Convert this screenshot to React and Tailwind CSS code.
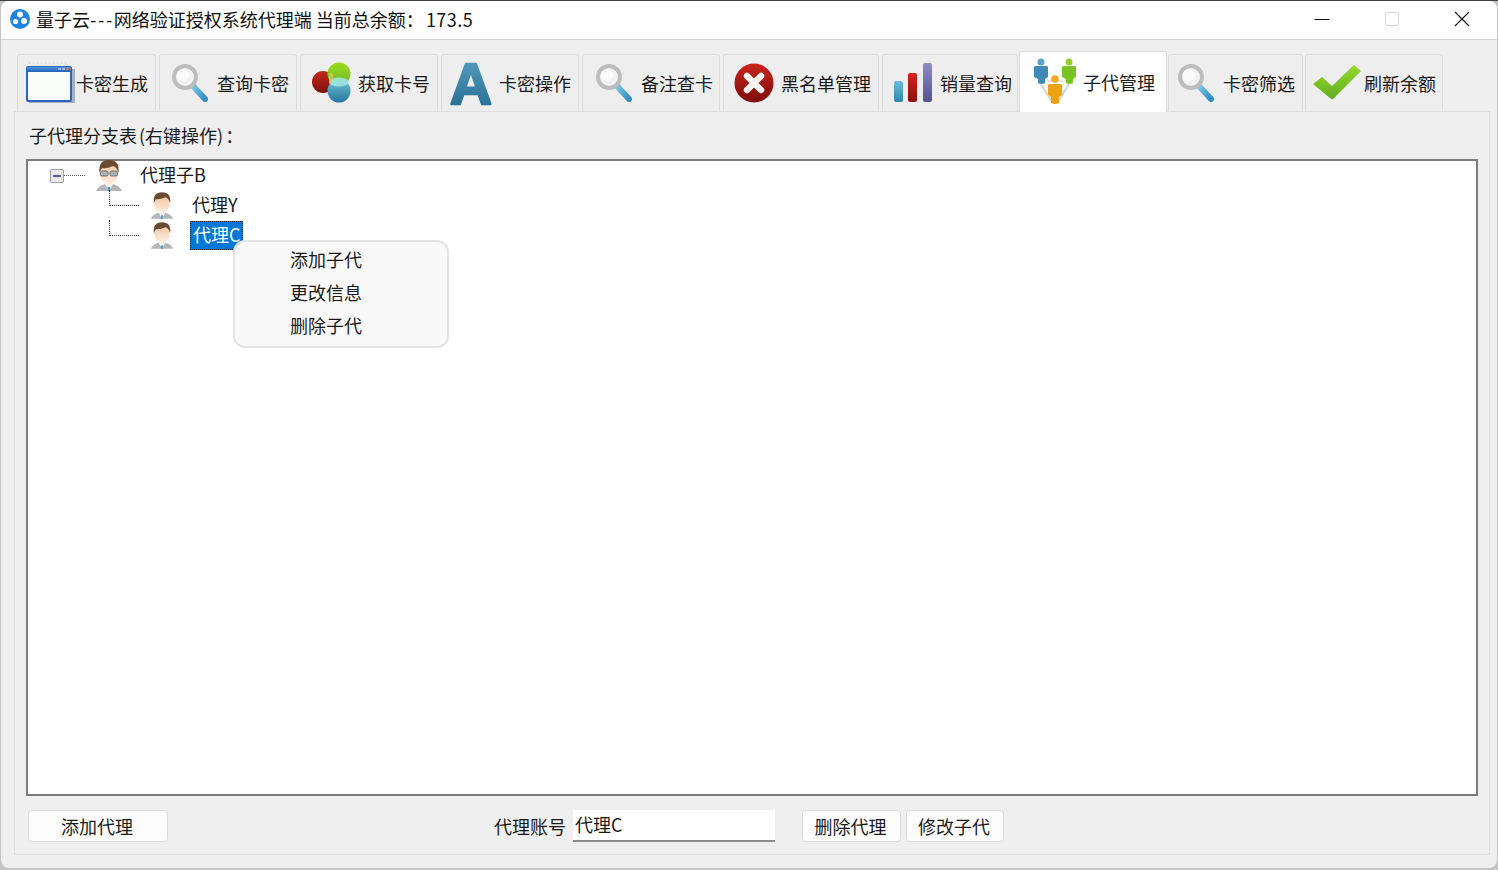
import React from "react";

const font = { fontFamily: '"Noto Sans CJK SC", "Liberation Sans", sans-serif' };

const WindowIcon = () => (
  <svg width="50" height="46" viewBox="0 0 50 46">
    <defs>
      <linearGradient id="winBar" x1="0" y1="0" x2="0" y2="1">
        <stop offset="0" stopColor="#4f9ae0" />
        <stop offset="1" stopColor="#1f5fb4" />
      </linearGradient>
    </defs>
    <g stroke="#bcd0d8" strokeWidth="1" strokeDasharray="1 3">
      <line x1="4" y1="3" x2="42" y2="3" />
    </g>
    <rect x="4" y="9" width="46" height="34" fill="#6b7f96" opacity="0.55" />
    <rect x="2" y="7" width="44" height="34" rx="1" fill="#fbfdfa" stroke="#2a66bd" strokeWidth="2" />
    <rect x="2" y="7" width="44" height="5" fill="url(#winBar)" />
    <rect x="33" y="8" width="3" height="2" fill="#8fb7e8" />
    <rect x="37" y="8" width="3" height="2" fill="#8fb7e8" />
    <rect x="41" y="8" width="3" height="2" fill="#e0764c" />
  </svg>
);

const SearchIcon = ({ id }) => (
  <svg width="38" height="40" viewBox="0 0 38 40">
    <defs>
      <linearGradient id={id} x1="0" y1="0" x2="1" y2="1">
        <stop offset="0" stopColor="#7cc6e6" />
        <stop offset="1" stopColor="#2f8fc0" />
      </linearGradient>
    </defs>
    <line x1="22" y1="23" x2="34" y2="36" stroke={`url(#${id})`} strokeWidth="6" strokeLinecap="round" />
    <circle cx="14" cy="14" r="11" fill="#f2f2f2" stroke="#bdbdbd" strokeWidth="4" />
    <circle cx="12" cy="12" r="6" fill="#fbfbfb" />
  </svg>
);

const BallsIcon = () => (
  <svg width="40" height="42" viewBox="0 0 40 42">
    <defs>
      <linearGradient id="ballRed" x1="0" y1="0" x2="0" y2="1">
        <stop offset="0" stopColor="#c8281e" />
        <stop offset="1" stopColor="#7d0f0c" />
      </linearGradient>
      <linearGradient id="ballGreen" x1="0" y1="0" x2="0" y2="1">
        <stop offset="0" stopColor="#9bdc1e" />
        <stop offset="1" stopColor="#6fb92a" />
      </linearGradient>
      <linearGradient id="ballBlue" x1="0" y1="0" x2="0" y2="1">
        <stop offset="0" stopColor="#6fc4d4" />
        <stop offset="1" stopColor="#2676a0" />
      </linearGradient>
    </defs>
    <circle cx="11" cy="20" r="11" fill="url(#ballRed)" />
    <circle cx="27" cy="12" r="11.5" fill="url(#ballGreen)" />
    <circle cx="27" cy="29" r="11.5" fill="url(#ballBlue)" />
    <ellipse cx="27" cy="20" rx="10" ry="4.5" fill="#9fe3dc" opacity="0.9" />
    <path d="M18 11 Q16 16 18 22 Q21 18 21 12Z" fill="#e0c46a" opacity="0.8" />
  </svg>
);

const LetterIcon = () => (
  <svg width="46" height="66" viewBox="0 0 46 66">
    <defs>
      <linearGradient id="letterA" x1="0" y1="0" x2="0" y2="1">
        <stop offset="0" stopColor="#5aa2c4" />
        <stop offset="1" stopColor="#22688f" />
      </linearGradient>
    </defs>
    <text
      x="23"
      y="54"
      textAnchor="middle"
      fontSize="58"
      fontWeight="700"
      fontFamily="Liberation Sans, sans-serif"
      fill="url(#letterA)"
      stroke="url(#letterA)"
      strokeWidth="2.5"
      strokeLinejoin="round"
    >
      A
    </text>
  </svg>
);

const BlockIcon = () => (
  <svg width="40" height="40" viewBox="0 0 40 40">
    <defs>
      <linearGradient id="blockRed" x1="0" y1="0" x2="0" y2="1">
        <stop offset="0" stopColor="#c9241c" />
        <stop offset="1" stopColor="#7c0c0a" />
      </linearGradient>
    </defs>
    <circle cx="20" cy="20" r="19.5" fill="url(#blockRed)" />
    <path d="M13 13 L27 27 M27 13 L13 27" stroke="#fdf5f3" strokeWidth="6.5" strokeLinecap="round" />
  </svg>
);

const BarsIcon = () => (
  <svg width="38" height="40" viewBox="0 0 38 40">
    <defs>
      <linearGradient id="barBlue" x1="0" y1="0" x2="0" y2="1">
        <stop offset="0" stopColor="#6cc0dc" />
        <stop offset="1" stopColor="#2e84ab" />
      </linearGradient>
      <linearGradient id="barRed" x1="0" y1="0" x2="0" y2="1">
        <stop offset="0" stopColor="#d0261e" />
        <stop offset="1" stopColor="#8c100c" />
      </linearGradient>
      <linearGradient id="barPurple" x1="0" y1="0" x2="0" y2="1">
        <stop offset="0" stopColor="#8d8cc9" />
        <stop offset="1" stopColor="#54528f" />
      </linearGradient>
    </defs>
    <rect x="0" y="18" width="9" height="21" rx="2" fill="url(#barBlue)" />
    <rect x="14" y="10" width="9" height="29" rx="2" fill="url(#barRed)" />
    <rect x="29" y="0" width="9" height="39" rx="2" fill="url(#barPurple)" />
  </svg>
);

const PeopleIcon = () => (
  <svg width="44" height="48" viewBox="0 0 44 48">
    <path d="M8 26 L19 44 M36 26 L25 44" stroke="#d6d6d0" strokeWidth="2" />
    <path d="M14 23 H30" stroke="#e4e4e0" strokeWidth="2" />
    <circle cx="8" cy="4" r="3.5" fill="#59a5cf" />
    <path d="M1 9 Q1 8 3 8 H13 Q15 8 15 9 V19 L12 21 V25 Q8 27 5 25 V21 L1 19Z" fill="#3f8bb8" />
    <circle cx="36" cy="4" r="3.5" fill="#8ed028" />
    <path d="M29 9 Q29 8 31 8 H41 Q43 8 43 9 V19 L40 21 V25 Q36 27 33 25 V21 L29 19Z" fill="#78c422" />
    <circle cx="22" cy="21" r="3.8" fill="#f3ab1c" />
    <path d="M15 27 Q15 26 17 26 H27 Q29 26 29 27 V37 L26 39 V45 Q22 47 18 45 V39 L15 37Z" fill="#eca212" />
  </svg>
);

const CheckIcon = () => (
  <svg width="48" height="36" viewBox="0 0 48 36">
    <defs>
      <linearGradient id="checkGreen" x1="0" y1="0" x2="0" y2="1">
        <stop offset="0" stopColor="#96d92c" />
        <stop offset="1" stopColor="#5fae22" />
      </linearGradient>
    </defs>
    <path d="M0 19 L9 12 L19 21 L41 0 L48 6 L20 34 Q19 35 17 33Z" fill="url(#checkGreen)" />
  </svg>
);

const Avatar = ({ width, height, glasses }) => (
  <svg width={width} height={height} viewBox="0 0 28 31">
    <defs>
      <linearGradient id={glasses ? "skinA" : "skinB"} x1="0" y1="0" x2="0" y2="1">
        <stop offset="0" stopColor="#f2bf97" />
        <stop offset="1" stopColor="#fdf1e6" />
      </linearGradient>
    </defs>
    <path d="M1 31 Q3 26 10 24 L14 27 L18 24 Q25 26 27 31Z" fill="#b2b6b7" />
    <path d="M10 24 L14 31 L18 24 Q14 26 10 24Z" fill="#f7f7f7" />
    <rect x="13" y="27" width="2" height="4" fill="#2f8fc8" />
    <ellipse cx="14" cy="13" rx="9" ry="12" fill={`url(#${glasses ? "skinA" : "skinB"})`} />
    <path d="M4.5 13 Q3 0 14 0 Q25 0 23.5 13 Q22 7 18 6 Q11 9 7 8 Q5.5 10 4.5 13Z" fill="#6b4a32" />
    {glasses && (
      <g fill="#a9b4b8" stroke="#555" strokeWidth="0.7">
        <rect x="5.5" y="11" width="7.5" height="5" rx="1.5" />
        <rect x="15" y="11" width="7.5" height="5" rx="1.5" />
      </g>
    )}
  </svg>
);

const tabs = [
  { label: "卡密生成", w: "w-[139px]", icon: <WindowIcon />, pad: "pl-[7px]", gap: "gap-[1px]", ml: "" },
  { label: "查询卡密", w: "w-[138px]", icon: <SearchIcon id="lens1" />, pad: "pl-[11px]", gap: "gap-[8px]", ml: "ml-[3px]" },
  { label: "获取卡号", w: "w-[138px]", icon: <BallsIcon />, pad: "pl-[11px]", gap: "gap-[6px]", ml: "ml-[3px]" },
  { label: "卡密操作", w: "w-[138px]", icon: <LetterIcon />, pad: "pl-[6px]", gap: "gap-[5px]", ml: "ml-[3px]" },
  { label: "备注查卡", w: "w-[138px]", icon: <SearchIcon id="lens2" />, pad: "pl-[12px]", gap: "gap-[8px]", ml: "ml-[3px]" },
  { label: "黑名单管理", w: "w-[156px]", icon: <BlockIcon />, pad: "pl-[10px]", gap: "gap-[7px]", ml: "ml-[3px]" },
  { label: "销量查询", w: "w-[136px]", icon: <BarsIcon />, pad: "pl-[11px]", gap: "gap-[8px]", ml: "ml-[3px]" },
  { label: "子代管理", w: "w-[148px]", icon: <PeopleIcon />, pad: "pl-[13px]", gap: "gap-[6px]", ml: "ml-px", active: true },
  { label: "卡密筛选", w: "w-[135px]", icon: <SearchIcon id="lens3" />, pad: "pl-[8px]", gap: "gap-[8px]", ml: "ml-px" },
  { label: "刷新余额", w: "w-[138px]", icon: <CheckIcon />, pad: "pl-[7px]", gap: "gap-[3px]", ml: "ml-[2px]" },
];

const Tab = ({ tab }) =>
  tab.active ? (
    <div className={`${tab.w} ${tab.pad} ${tab.gap} relative z-10 flex h-[61px] shrink-0 items-center rounded-t-[3px] border-x border-t border-[#dddddd] bg-white -mb-px text-[18px] text-[#1a1a1a]`}>
      {tab.icon}
      <span>{tab.label}</span>
    </div>
  ) : (
    <div className={`${tab.w} ${tab.pad} ${tab.gap} flex h-[57px] shrink-0 items-center rounded-t-[3px] border-x border-t border-[#dcdcdc] bg-[#eeeeee] text-[18px] text-[#1a1a1a]`}>
      {tab.icon}
      <span>{tab.label}</span>
    </div>
  );

const SmallButton = ({ className, children }) => (
  <button className={`${className} flex h-[32px] items-center justify-center rounded-[4px] border border-[#dcdcdc] bg-[#fdfdfd] pr-[2px] text-[18px] text-[#1a1a1a]`}>
    {children}
  </button>
);

const App = () => {
  return (
    <div className="h-[870px] w-[1498px] overflow-hidden border-t border-[#404040] bg-[#c4c4c4] px-px" style={font}>
      <div className="flex h-[867px] flex-col overflow-hidden rounded-lg bg-[#efefef]">
        {/* title bar */}
        <div className="flex h-[39px] shrink-0 items-center border-b border-[#d0d0d0] bg-white pl-[8px]">
          <svg width="22" height="22" viewBox="0 0 22 22" className="mb-[2px] shrink-0">
            <circle cx="11" cy="11" r="10" fill="#1f84e0" />
            <circle cx="11" cy="6.5" r="3" fill="#fff" />
            <circle cx="6.5" cy="13.5" r="2.6" fill="#fff" />
            <circle cx="15" cy="13" r="3" fill="#fff" />
          </svg>
          <span className="mb-[3px] ml-[5px] text-[18px] leading-none text-[#111]">
            量子云<span className="tracking-[1.7px]">---</span>网络验证授权系统代理端 当前总余额：
            <span className="ml-[2px] tracking-[0.5px]">173.5</span>
          </span>
          <div className="mb-[2px] ml-auto flex items-center">
            <svg width="16" height="16" viewBox="0 0 16 16" className="mr-[54px]">
              <line x1="0.5" y1="8.5" x2="15.5" y2="8.5" stroke="#111" />
            </svg>
            <svg width="16" height="16" viewBox="0 0 16 16" className="mr-[54px]">
              <rect x="1.5" y="1.5" width="13" height="13" rx="1.5" fill="none" stroke="#d8d8d8" />
            </svg>
            <svg width="16" height="16" viewBox="0 0 16 16" className="mr-[27px]">
              <path d="M1 1 L15 15 M15 1 L1 15" stroke="#111" strokeWidth="1.1" />
            </svg>
          </div>
        </div>

        {/* tabs */}
        <div className="flex h-[71px] shrink-0 items-end pl-[16px]">
          <div className="flex items-end">
            {tabs.map((tab) => (
              <div key={tab.label} className={tab.ml}>
                <Tab tab={tab} />
              </div>
            ))}
          </div>
        </div>

        {/* panel */}
        <div className="ml-[13px] mr-[7px] flex h-[744px] shrink-0 flex-col border border-[#dedede] bg-[#efefef] px-[11px]">
          <div className="flex h-[47px] shrink-0 items-center pl-[3px] text-[18px] text-[#1a1a1a]">
            子代理分支表<span className="ml-[2px]">(右键操作)</span><span className="ml-[2px]">：</span>
          </div>

          <div className="relative h-[637px] shrink-0 border-2 border-[#7d7d7d] bg-white pl-[22px] text-[18px] text-[#1a1a1a]">
            <div className="flex h-[29px] items-center">
              <div className="flex h-[14px] w-[14px] items-center justify-center rounded-[2px] border border-[#a0a0a0] bg-[#e8e8e8]">
                <div className="h-[2px] w-[8px] bg-[#4a5fa8]" />
              </div>
              <div className="h-0 w-[21px] border-b border-dotted border-[#555]" />
              <div className="ml-[10px] flex">
                <Avatar width={28} height={31} glasses />
              </div>
              <span className="ml-[17px] mb-[2px]">代理子B</span>
            </div>
            <div className="flex h-[30px] items-center pl-[59px]">
              <div className="h-[16px] w-[30px] self-start border-b border-l border-dotted border-[#444]" />
              <div className="ml-[11px] flex">
                <Avatar width={24} height={27} />
              </div>
              <span className="ml-[18px] mb-[2px]">代理Y</span>
            </div>
            <div className="flex h-[30px] items-center pl-[59px]">
              <div className="h-[16px] w-[30px] self-start border-b border-l border-dotted border-[#444]" />
              <div className="ml-[11px] flex">
                <Avatar width={24} height={27} />
              </div>
              <span className="ml-[16px] flex h-[29px] w-[53px] items-center border border-dotted border-[#222] bg-[#0078d7] pb-[2px] pl-[2px] text-white">代理C</span>
            </div>

            {/* context menu */}
            <div className="absolute left-[205px] top-[79px] z-20 flex h-[108px] w-[216px] flex-col justify-center rounded-[12px] border-2 border-[#e4e4e4] bg-[#f9f9f9] pb-[4px] pl-[55px] text-[18px] text-[#1a1a1a]">
              <div className="flex h-[33px] items-center">添加子代</div>
              <div className="flex h-[33px] items-center">更改信息</div>
              <div className="flex h-[33px] items-center">删除子代</div>
            </div>
          </div>

          {/* bottom row */}
          <div className="flex flex-1 items-start pl-[2px] pt-[14px]">
            <SmallButton className="w-[140px]">添加代理</SmallButton>
            <span className="ml-[326px] flex h-[32px] items-center text-[18px] text-[#1a1a1a]">代理账号</span>
            <div className="ml-[7px] flex h-[32px] w-[202px] items-center border-b-2 border-[#8c8c8c] bg-white pb-[2px] pl-[2px] text-[18px] text-[#1a1a1a]">代理C</div>
            <SmallButton className="ml-[27px] w-[99px]">删除代理</SmallButton>
            <SmallButton className="ml-[5px] w-[98px]">修改子代</SmallButton>
          </div>
        </div>
      </div>
    </div>
  );
};

export default App;
